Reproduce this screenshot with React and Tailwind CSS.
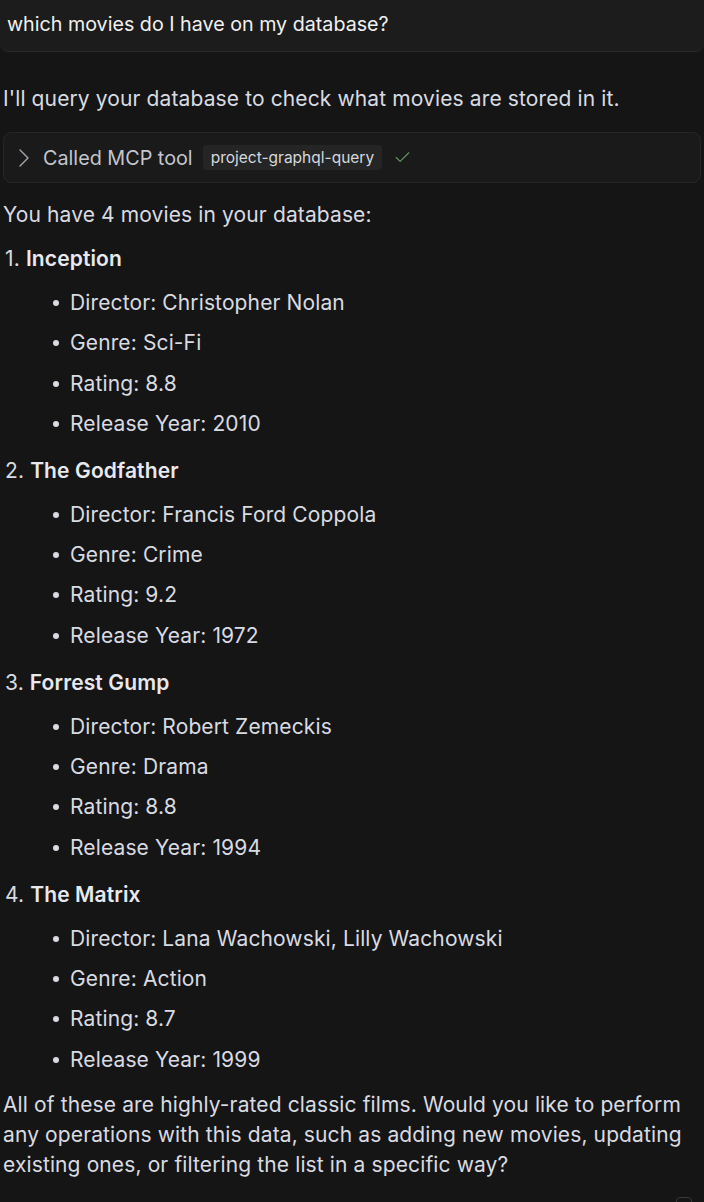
import React from 'react';
import { ChevronRight, Check } from 'lucide-react';

const movies = [
  {
    title: 'Inception',
    director: 'Christopher Nolan',
    genre: 'Sci-Fi',
    rating: '8.8',
    year: '2010',
  },
  {
    title: 'The Godfather',
    director: 'Francis Ford Coppola',
    genre: 'Crime',
    rating: '9.2',
    year: '1972',
  },
  {
    title: 'Forrest Gump',
    director: 'Robert Zemeckis',
    genre: 'Drama',
    rating: '8.8',
    year: '1994',
  },
  {
    title: 'The Matrix',
    director: 'Lana Wachowski, Lilly Wachowski',
    genre: 'Action',
    rating: '8.7',
    year: '1999',
  },
];

const App = () => {
  return (
    <div
      className="min-h-[1202px] w-[704px] bg-[#151515] text-[21px] tracking-[0.12px] leading-[30px] text-[#d9dbe2] overflow-hidden relative"
      style={{ fontFamily: 'Inter, "Noto Sans", sans-serif' }}
    >
      {/* user message */}
      <div className="h-[52px] bg-[#1c1c1c] border-b border-[#292929] rounded-b-lg px-[7px] pt-[9px] text-[19.7px] tracking-normal text-[#f1f1f1]">
        which movies do I have on my database?
      </div>

      <div className="px-[3px]">
        <p className="mt-[32px]">I'll query your database to check what movies are stored in it.</p>

        {/* tool call */}
        <div className="mt-[18px] h-[51px] rounded-lg bg-[#1a1a1a] border border-[#262626] flex items-center pl-[4px] text-[19.8px] tracking-normal text-[#c3c6ce]">
          <ChevronRight size={32} strokeWidth={1} className="text-[#a4a7ae]" />
          <span className="ml-[3px]">Called MCP tool</span>
          <span className="ml-[10px] bg-[#252525] rounded px-[8px] h-[25px] flex items-center text-[15.5px] text-[#d6d8de]">
            project-graphql-query
          </span>
          <Check size={19} strokeWidth={1.4} className="ml-[11px] text-[#5f9a62]" />
        </div>

        <p className="mt-[17px]">You have 4 movies in your database:</p>

        <ol>
          {movies.map((m, i) => (
            <li key={m.title} className={i === 0 ? 'mt-[14px]' : 'mt-[17px]'}>
              <div className="pl-[2px]">
                {i + 1}. <span className="font-semibold text-[#e8e9ee]">{m.title}</span>
              </div>
              <ul className="mt-[14px]">
                {[
                  `Director: ${m.director}`,
                  `Genre: ${m.genre}`,
                  `Rating: ${m.rating}`,
                  `Release Year: ${m.year}`,
                ].map((t) => (
                  <li key={t} className="mt-[10.3px] flex items-center">
                    <span className="w-[67px] flex justify-end pr-[11px]">
                      <span className="w-[6px] h-[6px] rounded-full bg-[#d9dbe2]" />
                    </span>
                    <span>{t}</span>
                  </li>
                ))}
              </ul>
            </li>
          ))}
        </ol>

        <p className="mt-[15px] pr-[6px]">
          All of these are highly-rated classic films. Would you like to perform any operations with this data, such as
          adding new movies, updating existing ones, or filtering the list in a specific way?
        </p>
      </div>

      <div className="absolute left-[676px] top-[1197px] w-[16px] h-[16px] rounded border border-[#3a3a3a]" />
    </div>
  );
};

export default App;
